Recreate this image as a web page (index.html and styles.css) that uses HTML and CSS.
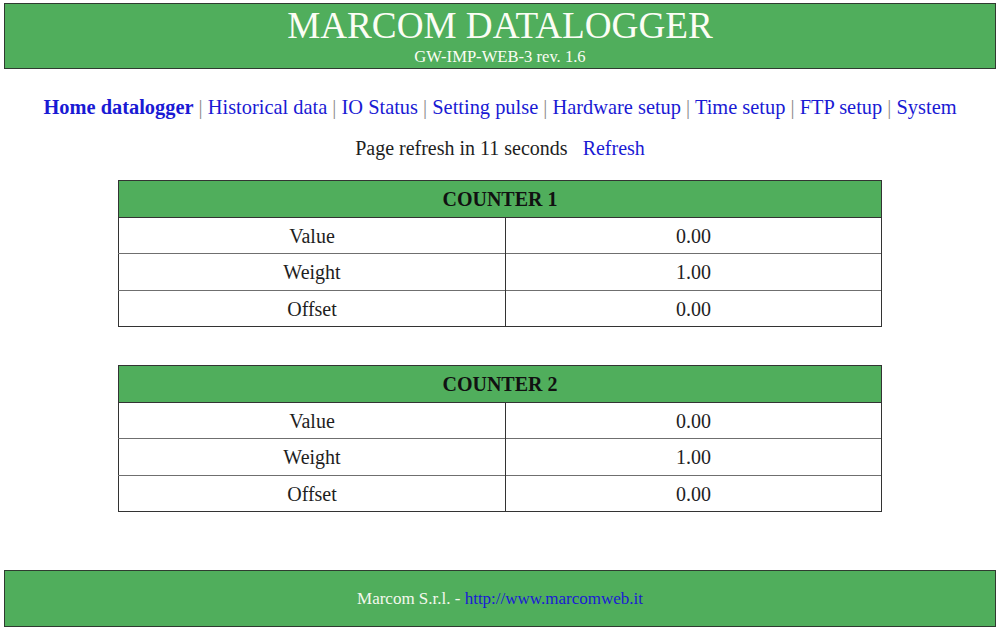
FILE: index.html
```html
<!DOCTYPE html>
<html lang="it">
<head>
<meta charset="utf-8">
<title>MARCOM DATALOGGER</title>
<link rel="stylesheet" href="styles.css">
</head>
<body>
<header class="banner">
  <h1 class="banner-title">MARCOM DATALOGGER</h1>
  <div class="banner-sub">GW-IMP-WEB-3 rev. 1.6</div>
</header>

<nav class="menu">
  <a class="menu-link active" href="#">Home datalogger</a><span class="sep"> | </span><a class="menu-link" href="#">Historical data</a><span class="sep"> | </span><a class="menu-link" href="#">IO Status</a><span class="sep"> | </span><a class="menu-link" href="#">Setting pulse</a><span class="sep"> | </span><a class="menu-link" href="#">Hardware setup</a><span class="sep"> | </span><a class="menu-link" href="#">Time setup</a><span class="sep"> | </span><a class="menu-link" href="#">FTP setup</a><span class="sep"> | </span><a class="menu-link" href="#">System</a>
</nav>

<div class="refresh">Page refresh in 11 seconds&nbsp;&nbsp; <a class="menu-link" href="#">Refresh</a></div>

<table class="counter">
  <tr><th colspan="2">COUNTER 1</th></tr>
  <tr><td class="label">Value</td><td>0.00</td></tr>
  <tr><td class="label">Weight</td><td>1.00</td></tr>
  <tr><td class="label">Offset</td><td>0.00</td></tr>
</table>

<table class="counter second">
  <tr><th colspan="2">COUNTER 2</th></tr>
  <tr><td class="label">Value</td><td>0.00</td></tr>
  <tr><td class="label">Weight</td><td>1.00</td></tr>
  <tr><td class="label">Offset</td><td>0.00</td></tr>
</table>

<footer class="foot">Marcom S.r.l. - <a class="foot-link" href="#">http://www.marcomweb.it</a></footer>
</body>
</html>
```

FILE: styles.css
```css
html, body {
  background: #ffffff;
}
body {
  margin: 0;
  padding: 3px 4px 0 4px;
  font-family: "Liberation Serif", "Times New Roman", serif;
  color: #1e1e1e;
}

.banner {
  background: #50ae5c;
  border: 1px solid #2f3b30;
  padding: 4px 0 3px 0;
  text-align: center;
  color: #fbfdf4;
}
.banner-title {
  margin: 0;
  font-size: 37.2px;
  line-height: 36px;
  font-weight: normal;
}
.banner-sub {
  margin-top: 5px;
  font-size: 16.6px;
  line-height: 16px;
}

.menu {
  margin-top: 26px;
  text-align: center;
  font-size: 20.4px;
  line-height: 24px;
}
.menu-link {
  color: #1a1ad4;
  text-decoration: none;
}
.menu-link.active {
  font-weight: bold;
}
.sep {
  color: #8c8c8c;
}

.refresh {
  margin-top: 17px;
  text-align: center;
  font-size: 20px;
  line-height: 24px;
}

.counter {
  width: 764px;
  margin: 20px auto 0 auto;
  border-collapse: collapse;
  border: 1px solid #333333;
  font-size: 20px;
  line-height: 24px;
}
.counter.second {
  margin-top: 38px;
}
.counter th {
  background: #50ae5c;
  color: #111111;
  font-weight: bold;
  padding: 6px 0 5.5px 0;
  border-bottom: 1px solid #333333;
}
.counter td {
  text-align: center;
  padding: 6px 0 5.5px 0;
  border-top: 1px solid #6f6f6f;
  border-right: 1px solid #333333;
}
.counter td.label {
  width: 386px;
}

.foot {
  margin-top: 58px;
  background: #50ae5c;
  border: 1px solid #2f3b30;
  padding: 18px 0 17px 0;
  text-align: center;
  font-size: 17px;
  line-height: 20px;
  color: #f4f8ee;
}
.foot-link {
  color: #1a1ad4;
  text-decoration: none;
}
```
